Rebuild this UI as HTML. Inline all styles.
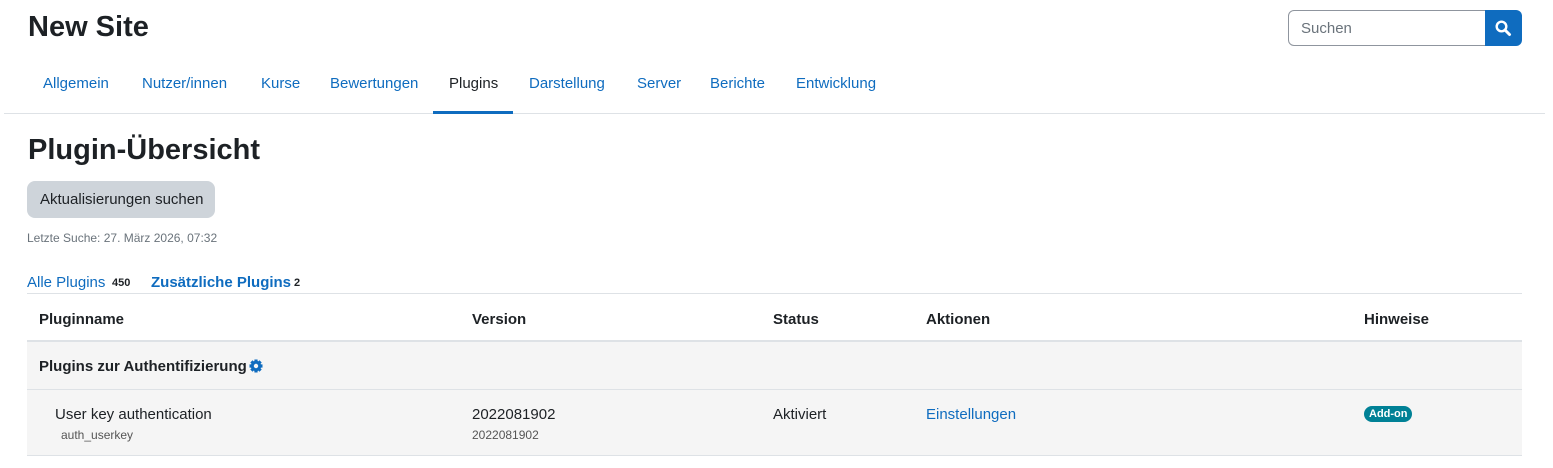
<!DOCTYPE html>
<html><head><meta charset="utf-8"><style>
*{margin:0;padding:0;box-sizing:border-box}
body{width:1553px;height:468px;background:#fff;font-family:"Liberation Sans",sans-serif;color:#1d2125;position:relative;overflow:hidden;font-size:15px}
.a{position:absolute;white-space:nowrap}
.nav{color:#0f6cbf;font-size:15px;top:75px}
.th{font-weight:bold;top:311px;font-size:15px}
</style></head><body>
<div class="a" style="left:28px;top:11px;font-size:29px;font-weight:bold">New Site</div>
<div class="a" style="left:1288px;top:10px;width:198px;height:36px;border:1px solid #8f959e;border-radius:6px 0 0 6px;"></div>
<div class="a" style="left:1301px;top:20px;color:#6a737b;font-size:15px">Suchen</div>
<div class="a" style="left:1485px;top:10px;width:37px;height:36px;background:#0f6cbf;border-radius:0 6px 6px 0"></div>
<svg class="a" style="left:1494px;top:19px" width="18" height="18" viewBox="0 0 18 18"><circle cx="7.5" cy="7.5" r="4.8" fill="none" stroke="#fff" stroke-width="2.4"/><path d="M11 11l4.5 4.5" stroke="#fff" stroke-width="3" stroke-linecap="round"/></svg>
<div class="a nav" style="left:43px">Allgemein</div>
<div class="a nav" style="left:142px">Nutzer/innen</div>
<div class="a nav" style="left:261px">Kurse</div>
<div class="a nav" style="left:330px">Bewertungen</div>
<div class="a nav" style="left:449px;color:#1d2125">Plugins</div>
<div class="a nav" style="left:529px">Darstellung</div>
<div class="a nav" style="left:637px">Server</div>
<div class="a nav" style="left:710px">Berichte</div>
<div class="a nav" style="left:796px">Entwicklung</div>
<div class="a" style="left:4px;top:113px;width:1541px;height:1px;background:#dee2e6"></div>
<div class="a" style="left:433px;top:111px;width:80px;height:3px;background:#0f6cbf"></div>
<div class="a" style="left:28px;top:134px;font-size:29px;font-weight:bold">Plugin-Übersicht</div>
<div class="a" style="left:27px;top:181px;width:188px;height:37px;background:#ced4da;border-radius:8px"></div>
<div class="a" style="left:40px;top:191px;font-size:15px">Aktualisierungen suchen</div>
<div class="a" style="left:27px;top:231px;font-size:12px;color:#6a737b">Letzte Suche: 27. März 2026, 07:32</div>
<div class="a" style="left:27px;top:274px;color:#0f6cbf">Alle Plugins</div>
<div class="a" style="left:112px;top:277px;font-size:11px;font-weight:bold">450</div>
<div class="a" style="left:151px;top:274px;color:#0f6cbf;font-weight:bold">Zusätzliche Plugins</div>
<div class="a" style="left:294px;top:277px;font-size:11px;font-weight:bold">2</div>
<div class="a" style="left:27px;top:293px;width:1495px;height:1px;background:#dee2e6"></div>
<div class="a th" style="left:39px">Pluginname</div>
<div class="a th" style="left:472px">Version</div>
<div class="a th" style="left:773px">Status</div>
<div class="a th" style="left:926px">Aktionen</div>
<div class="a th" style="left:1364px">Hinweise</div>
<div class="a" style="left:27px;top:340px;width:1495px;height:116px;background:#f5f5f5;border-top:2px solid #dee2e6;border-bottom:1px solid #dee2e6"></div>
<div class="a" style="left:27px;top:389px;width:1495px;height:1px;background:#dee2e6"></div>
<div class="a" style="left:39px;top:358px;font-weight:bold;font-size:15px">Plugins zur Authentifizierung</div>
<svg class="a" style="left:248px;top:358px" width="16" height="16" viewBox="0 0 16 16"><g fill="#0f6cbf"><circle cx="8" cy="8" r="5.2"/><g stroke="#0f6cbf" stroke-width="3.2"><path d="M8 1.5v13M1.5 8h13M3.4 3.4l9.2 9.2M12.6 3.4l-9.2 9.2"/></g></g><circle cx="8" cy="8" r="2.2" fill="#f5f5f5"/></svg>
<div class="a" style="left:55px;top:406px">User key authentication</div>
<div class="a" style="left:61px;top:428px;font-size:12px;color:#555">auth_userkey</div>
<div class="a" style="left:472px;top:406px">2022081902</div>
<div class="a" style="left:472px;top:428px;font-size:12px;color:#555">2022081902</div>
<div class="a" style="left:773px;top:406px">Aktiviert</div>
<div class="a" style="left:926px;top:406px;color:#0f6cbf">Einstellungen</div>
<div class="a" style="left:1364px;top:406px;height:16px;padding:0 5px;background:#008196;color:#fff;font-size:11px;font-weight:bold;border-radius:8px;line-height:16px">Add-on</div>
</body></html>
